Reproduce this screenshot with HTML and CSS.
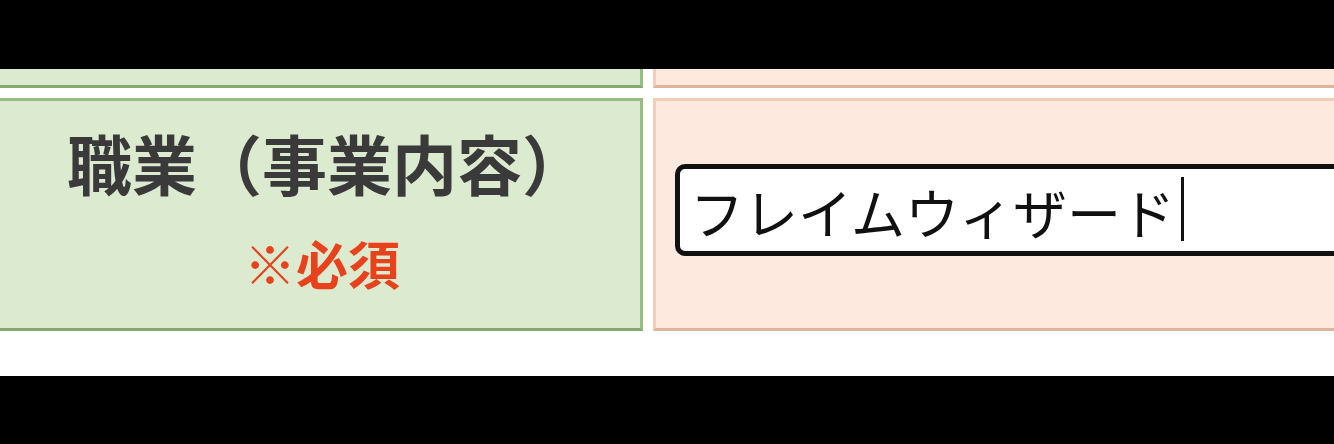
FILE: index.html
```html
<!DOCTYPE html>
<html lang="ja">
<head>
<meta charset="utf-8">
<title>職業（事業内容）</title>
<link rel="stylesheet" href="styles.css">
</head>
<body>
<div class="frame">
  <div class="bar bar-top"></div>
  <div class="sheet">
    <div class="form-grid">
      <div class="cell cell-label cell-prev"></div>
      <div class="cell cell-field cell-prev"></div>
      <div class="cell cell-label">
        <div class="label-main">職業（事業内容）</div>
        <div class="label-req">※必須</div>
      </div>
      <div class="cell cell-field">
        <div class="textbox" role="textbox">フレイムウィザード<span class="caret"></span></div>
      </div>
    </div>
  </div>
  <div class="bar bar-bottom"></div>
</div>
</body>
</html>
```

FILE: styles.css
```css
html, body {
  margin: 0;
  padding: 0;
  background: #000;
}

.frame {
  width: 1334px;
  height: 444px;
  display: flex;
  flex-direction: column;
  overflow: hidden;
  font-family: "Noto Sans CJK JP", "Noto Sans", sans-serif;
}

.bar-top {
  height: 69px;
  background: #000;
  flex: none;
}

.sheet {
  height: 307px;
  flex: none;
  background: #fff;
  overflow: hidden;
}

.bar-bottom {
  flex: 1;
  background: #000;
}

.form-grid {
  display: grid;
  grid-template-columns: 643px 700px;
  grid-template-rows: 19px 233px;
  column-gap: 10px;
  row-gap: 10px;
}

.cell {
  box-sizing: border-box;
}

.cell-label {
  background: #dcebd0;
  border: 3px solid #97bd80;
  border-left: none;
  border-bottom-color: #86a870;
}

.cell-field {
  background: #fde9dd;
  border: 3px solid #f2cdb8;
  border-right: none;
  border-bottom-color: #e0b49c;
}

.cell-prev {
  border-top: none;
}

.cell-label:not(.cell-prev) {
  display: flex;
  flex-direction: column;
  align-items: center;
  justify-content: center;
  gap: 36px;
  padding: 0 0 10px 14px;
}

.label-main {
  font-size: 65px;
  line-height: 70px;
  font-weight: 700;
  color: #3a3a3a;
  white-space: nowrap;
}

.label-req {
  font-size: 52px;
  line-height: 60px;
  font-weight: 700;
  color: #e8421c;
  white-space: nowrap;
  margin-left: -10px;
}

.cell-field:not(.cell-prev) {
  padding: 63px 0 0 19px;
}

.textbox {
  box-sizing: border-box;
  width: 720px;
  height: 92px;
  border: 5px solid #111;
  border-radius: 10px;
  background: #fff;
  padding: 4px 0 0 10px;
  font-size: 54px;
  line-height: 78px;
  font-weight: 400;
  color: #111;
  white-space: nowrap;
  display: flex;
  align-items: center;
}

.caret {
  display: inline-block;
  width: 3px;
  height: 64px;
  background: #111;
  margin-left: 6px;
  margin-top: -6px;
}
```
